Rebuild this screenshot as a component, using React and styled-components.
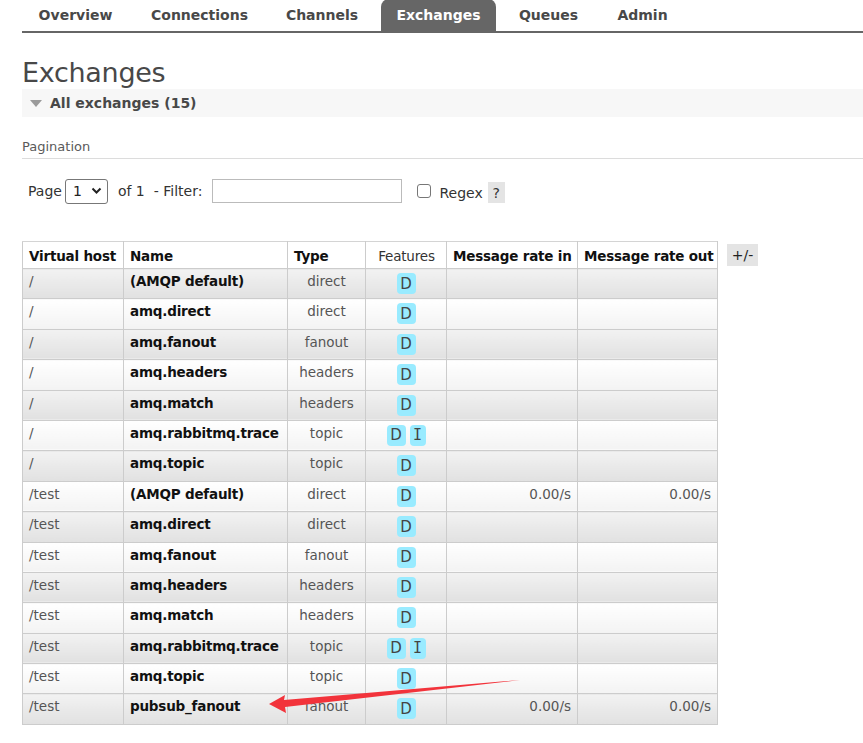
import React from "react";
import styled, { createGlobalStyle } from "styled-components";

const Global = createGlobalStyle`
  html, body { margin: 0; padding: 0; background: #fff; }
  body { font-family: "DejaVu Sans", Verdana, sans-serif; color: #444; }
  * { box-sizing: border-box; }
`;

const Page = styled.div`
  position: relative;
  width: 863px;
  height: 743px;
  overflow: hidden;
  padding-left: 22px;
`;

const Nav = styled.ul`
  display: flex;
  margin: 0;
  padding: 0;
  list-style: none;
  height: 32px;
  border-bottom: 2px solid #666;
  box-sizing: content-box;
  margin-top: -1px;
`;

const Tab = styled.li`
  width: ${(p) => p.$w}px;
  margin-right: ${(p) => p.$m}px;
  display: flex;
  align-items: center;
  justify-content: center;
  font-weight: bold;
  font-size: 14px;
  color: ${(p) => (p.$active ? "#fff" : "#484848")};
  background: ${(p) => (p.$active ? "#666" : "transparent")};
  border-radius: 8px 8px 0 0;
`;

const Title = styled.h1`
  margin: 24px 0 0 0;
  font-size: 27px;
  font-weight: normal;
  color: #484848;
  line-height: 32px;
  letter-spacing: -0.3px;
`;

const SectionBar = styled.div`
  height: 28px;
  background: #f7f7f7;
  display: flex;
  align-items: center;
  padding-left: 8px;
  gap: 8px;
  font-weight: bold;
  font-size: 14px;
  color: #484848;
`;

const Tri = styled.span`
  width: 0;
  height: 0;
  border-left: 6px solid transparent;
  border-right: 6px solid transparent;
  border-top: 7px solid #9a9a9a;
  margin-top: 1px;
`;

const SubHead = styled.div`
  margin-top: 21px;
  font-size: 13px;
  color: #5a5a5a;
  padding-bottom: 3px;
  border-bottom: 1px solid #dcdcdc;
  line-height: 17px;
`;

const Controls = styled.div`
  display: flex;
  align-items: center;
  margin-top: 19px;
  padding-left: 6px;
  font-size: 14px;
  color: #333;
  height: 26px;
`;

const Select = styled.div`
  width: 43px;
  height: 25px;
  border: 1px solid #777;
  border-radius: 3px;
  margin-left: 3px;
  display: flex;
  align-items: center;
  padding-left: 7px;
  gap: 9px;
  font-size: 14px;
  color: #222;
`;

const Label = styled.span`
  margin-left: ${(p) => p.$ml || 0}px;
  margin-top: ${(p) => p.$mt || 0}px;
`;

const Input = styled.div`
  width: 190px;
  height: 24px;
  border: 1px solid #bbb;
  margin-left: 10px;
`;

const Check = styled.div`
  width: 14px;
  height: 14px;
  border: 1px solid #777;
  border-radius: 3px;
  margin-left: 15px;
`;

const Help = styled.span`
  display: inline-flex;
  align-items: center;
  justify-content: center;
  width: 17px;
  height: 21px;
  background: #e4e4e4;
  margin-left: 5px;
  margin-top: 3px;
  font-size: 14px;
  color: #333;
`;

const TableWrap = styled.div`
  display: flex;
  align-items: flex-start;
  margin-top: 37px;
  gap: 9px;
`;

const Table = styled.table`
  border-collapse: collapse;
  font-size: 13.5px;
  table-layout: fixed;
  width: 695px;
`;

const Th = styled.th`
  height: 27px;
  border: 1px solid #ccc;
  border-top-color: #d4d4d4;
  font-weight: ${(p) => (p.$light ? "normal" : "bold")};
  color: ${(p) => (p.$light ? "#333" : "#111")};
  text-align: ${(p) => p.$align || "left"};
  padding: 2px 5px 0 6px;
  white-space: nowrap;
  overflow: hidden;
  background: #fff;
  letter-spacing: -0.2px;
`;

const Tr = styled.tr`
  td {
    background: ${(p) =>
      p.$alt
        ? "linear-gradient(#f2f2f2, #e1e1e1)"
        : "linear-gradient(#ffffff, #f3f3f3)"};
  }
`;

const Td = styled.td`
  height: 30.4px;
  border: 1px solid #ccc;
  padding: 3px 6px 0 6px;
  vertical-align: top;
  text-align: ${(p) => p.$align || "left"};
  color: ${(p) => (p.$bold ? "#111" : "#555")};
  font-weight: ${(p) => (p.$bold ? "bold" : "normal")};
  white-space: nowrap;
  overflow: hidden;
  line-height: 18px;
  letter-spacing: ${(p) => (p.$bold ? "-0.2px" : "0")};
`;

const Badges = styled.div`
  display: flex;
  justify-content: center;
  gap: 4px;
  padding-top: 1px;
`;

const Badge = styled.span`
  display: inline-flex;
  align-items: center;
  justify-content: center;
  width: ${(p) => (p.$narrow ? 16 : 19)}px;
  height: 21px;
  border-radius: 4px;
  background: #99ebff;
  color: #444;
  font-size: 15px;
  font-family: ${(p) => (p.$narrow ? '"DejaVu Sans Mono", monospace' : '"DejaVu Sans", sans-serif')};
`;

const PlusMinus = styled.div`
  margin-top: 3px;
  width: 31px;
  height: 22px;
  background: #e4e4e4;
  display: flex;
  align-items: center;
  justify-content: center;
  font-size: 14px;
  color: #222;
`;

const Arrow = styled.svg`
  position: absolute;
  left: 0;
  top: 0;
  pointer-events: none;
`;

const tabs = [
  { t: "Overview", w: 107, m: 7 },
  { t: "Connections", w: 127, m: 7 },
  { t: "Channels", w: 104, m: 7 },
  { t: "Exchanges", w: 115, m: 7 },
  { t: "Queues", w: 91, m: 7 },
  { t: "Admin", w: 83, m: 0 },
];

const names = [
  ["(AMQP default)", "direct", ["D"], false],
  ["amq.direct", "direct", ["D"], false],
  ["amq.fanout", "fanout", ["D"], false],
  ["amq.headers", "headers", ["D"], false],
  ["amq.match", "headers", ["D"], false],
  ["amq.rabbitmq.trace", "topic", ["D", "I"], false],
  ["amq.topic", "topic", ["D"], false],
];

const rows = [
  ...names.map((n) => ["/", ...n]),
  ["/test", "(AMQP default)", "direct", ["D"], true],
  ...names.slice(1).map((n) => ["/test", ...n]),
  ["/test", "pubsub_fanout", "fanout", ["D"], true],
];

export default function App() {
  return (
    <Page>
      <Global />
      <Nav>
        {tabs.map((t) => (
          <Tab key={t.t} $w={t.w} $m={t.m} $active={t.t === "Exchanges"}>
            {t.t}
          </Tab>
        ))}
      </Nav>
      <Title>Exchanges</Title>
      <SectionBar>
        <Tri />
        All exchanges (15)
      </SectionBar>
      <SubHead>Pagination</SubHead>
      <Controls>
        <span>Page</span>
        <Select>
          1
          <svg width="11" height="8" viewBox="0 0 11 8">
            <path d="M1.5 1.5 L5.5 5.5 L9.5 1.5" stroke="#222" strokeWidth="2" fill="none" />
          </svg>
        </Select>
        <Label $ml={10}>of 1</Label>
        <Label $ml={9}>- Filter:</Label>
        <Input />
        <Check />
        <Label $ml={8} $mt={3}>Regex</Label>
        <Help>?</Help>
      </Controls>
      <TableWrap>
        <Table>
          <colgroup>
            <col style={{ width: 101 }} />
            <col style={{ width: 164 }} />
            <col style={{ width: 78 }} />
            <col style={{ width: 81 }} />
            <col style={{ width: 131 }} />
            <col style={{ width: 140 }} />
          </colgroup>
          <thead>
            <tr>
              <Th>Virtual host</Th>
              <Th>Name</Th>
              <Th>Type</Th>
              <Th $light $align="center">Features</Th>
              <Th>Message rate in</Th>
              <Th>Message rate out</Th>
            </tr>
          </thead>
          <tbody>
            {rows.map((r, i) => (
              <Tr key={i} $alt={i % 2 === 0}>
                <Td>{r[0]}</Td>
                <Td $bold>{r[1]}</Td>
                <Td $align="center">{r[2]}</Td>
                <Td>
                  <Badges>
                    {r[3].map((b) => (
                      <Badge key={b} $narrow={b === "I"}>{b}</Badge>
                    ))}
                  </Badges>
                </Td>
                <Td $align="right">{r[4] ? "0.00/s" : ""}</Td>
                <Td $align="right">{r[4] ? "0.00/s" : ""}</Td>
              </Tr>
            ))}
          </tbody>
        </Table>
        <PlusMinus>+/-</PlusMinus>
      </TableWrap>
      <Arrow width="863" height="743" viewBox="0 0 863 743">
        <path
          d="M520 680 L284 700 L285 695 L269 704 L286 713 L285 707 Z"
          fill="#f2333b"
        />
      </Arrow>
    </Page>
  );
}
